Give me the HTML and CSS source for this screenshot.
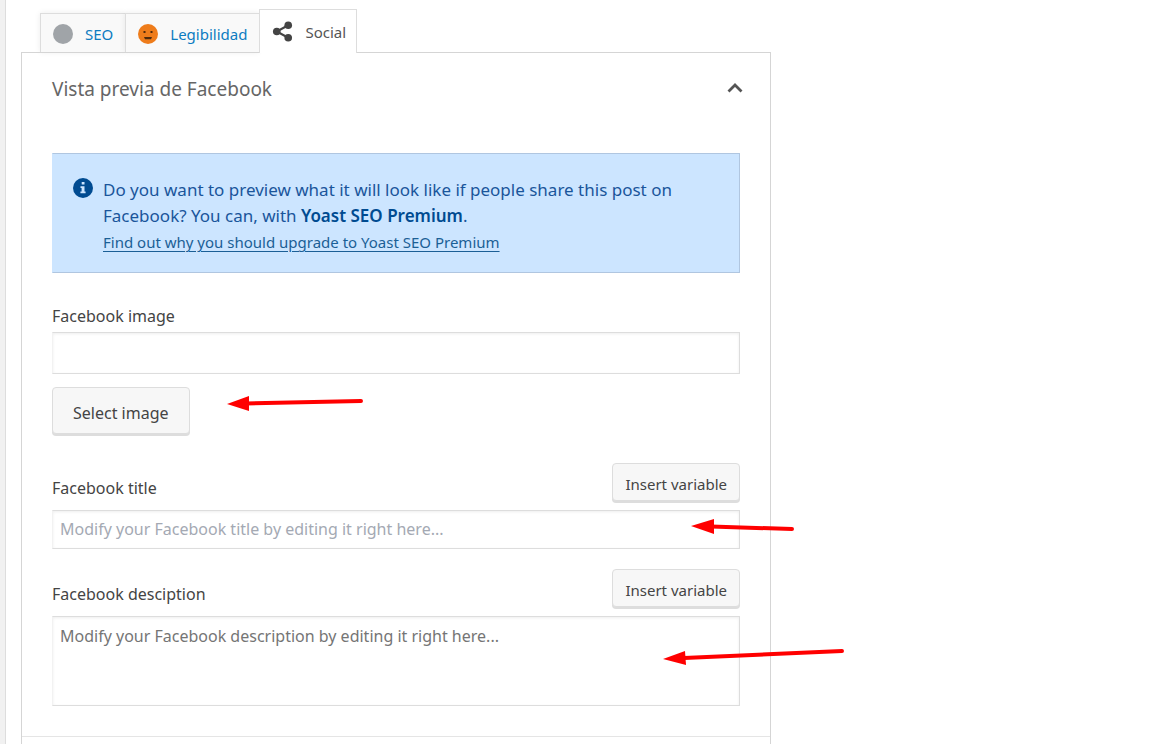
FILE: index.html
```
<!DOCTYPE html>
<html lang="es">
<head>
<meta charset="utf-8">
<meta name="viewport" content="width=device-width, initial-scale=1">
<title>Vista previa de Facebook</title>
<link rel="stylesheet" href="styles.css">
</head>
<body>

<main class="editor">
  <nav class="tabs">
    <a class="tab" href="#seo">
      <svg class="tab-icon" viewBox="0 0 20 20" aria-hidden="true"><circle cx="10" cy="10" r="10" fill="#a0a4a8"/></svg>
      SEO
    </a>
    <a class="tab" href="#legibilidad">
      <svg class="tab-icon" viewBox="0 0 20 20" aria-hidden="true">
        <circle cx="10" cy="10" r="10" fill="#ee7c1b"/>
        <path d="M5.500 7h2v2h-2zM12.500 7h2v2h-2zM6 13h8l-1 2.200H7z" fill="#4f2a0c"/>
      </svg>
      Legibilidad
    </a>
    <a class="tab active" href="#social">
      <svg class="share-icon" viewBox="0 0 22 22" aria-hidden="true">
        <path d="M17 4.500L5 11l12 6.500" fill="none" stroke="#444" stroke-width="2.200"/>
        <circle cx="17" cy="4.500" r="4" fill="#444"/>
        <circle cx="5" cy="11" r="4" fill="#444"/>
        <circle cx="17" cy="17.500" r="4" fill="#444"/>
      </svg>
      Social
    </a>
  </nav>

  <section class="panel" id="social">
    <button type="button" class="panel-header" aria-expanded="true">
      Vista previa de Facebook
      <svg class="chevron" viewBox="0 0 16 12" aria-hidden="true"><path d="M1.500 8.500L8 2l6.500 6.500" fill="none" stroke="#555" stroke-width="2.800"/></svg>
    </button>

    <div class="panel-body">
      <div class="notice">
        <svg class="info-icon" viewBox="0 0 20 20" aria-hidden="true">
          <circle cx="10" cy="10" r="10" fill="#004b91"/>
          <path d="M8.700 4h2.800v2.600H8.700zM7.500 8.200h4v5.300h1.100v1.700H7.400v-1.700h1.200V9.900H7.500z" fill="#cce5ff"/>
        </svg>
        <div class="notice-text">
          <p>Do you want to preview what it will look like if people share this post on Facebook? You can, with <b>Yoast SEO Premium</b>.</p>
          <a href="#premium">Find out why you should upgrade to Yoast SEO Premium</a>
        </div>
      </div>

      <div class="field">
        <label for="fb-image">Facebook image</label>
        <input type="text" id="fb-image">
        <button type="button" class="btn btn-large">Select image</button>
      </div>

      <div class="field">
        <div class="field-head">
          <label for="fb-title">Facebook title</label>
          <button type="button" class="btn">Insert variable</button>
        </div>
        <input type="text" id="fb-title" placeholder="Modify your Facebook title by editing it right here...">
      </div>

      <div class="field">
        <div class="field-head">
          <label for="fb-description">Facebook desciption</label>
          <button type="button" class="btn">Insert variable</button>
        </div>
        <textarea id="fb-description" placeholder="Modify your Facebook description by editing it right here..."></textarea>
      </div>
    </div>
  </section>

  <!-- Arrows pointing at the three fields -->
  <svg class="arrows" width="860" height="744" aria-hidden="true">
    <g stroke="#f00" stroke-width="4" stroke-linecap="round">
      <path d="M361 401L246 403.500"/>
      <path d="M792 529L711 526.500"/>
      <path d="M842 651L684 658"/>
    </g>
    <g fill="#f00">
      <path d="M227 404L249 396v15z"/>
      <path d="M691 526L714 519v15z"/>
      <path d="M663 659L685 651l1 14z"/>
    </g>
  </svg>
</main>

</body>
</html>
```

FILE: styles.css
```
* { box-sizing: border-box; }

body {
  margin: 0;
  padding-left: 5px;
  background-color: #f1f1f1;
  color: #444;
  font-family: "Noto Sans", "Open Sans", sans-serif;
  font-size: 16px;
  line-height: 26px;
}

button, input, textarea { font: inherit; color: inherit; }

.editor {
  display: flex;
  flex-direction: column;
  min-height: 100vh;
  padding: 9px 15px 0;
  border-left: 1px solid #ddd;
  background-color: #fff;
}

/* Tabs */
.tabs { display: flex; align-items: flex-end; padding-left: 19px; font-size: 15px; }
.tab {
  display: flex;
  align-items: center;
  gap: 12px;
  height: 39px;
  padding: 2px 12px 0;
  border: 1px solid #ddd;
  border-right: 0;
  border-bottom: 0;
  background-color: #f9f9f9;
  box-shadow: 0 0 6px rgba(0, 0, 0, 0.08);
  color: #0d7cc1;
  text-decoration: none;
}
.tab.active {
  position: relative;
  height: 44px;
  margin-bottom: -1px;
  padding: 2px 10px 2px 12px;
  border-right: 1px solid #ddd;
  background-color: #fff;
  box-shadow: none;
  color: #555;
}
.tab-icon { width: 20px; height: 20px; }
.share-icon { width: 21px; height: 21px; }

/* Panel */
.panel {
  flex: 1;
  width: 100%;
  max-width: 750px;
  border: 1px solid #d5d5d5;
  border-bottom: 0;
}
.panel-header {
  display: flex;
  justify-content: space-between;
  align-items: center;
  width: 100%;
  height: 72px;
  padding: 0 27px 0 30px;
  border: 0;
  background: none;
  color: #666;
  font-size: 19px;
  cursor: pointer;
}
.chevron { width: 16px; height: 12px; }
.panel-body { padding: 28px 30px 30px; border-bottom: 1px solid #e5e5e5; }

.notice {
  display: flex;
  align-items: flex-start;
  gap: 10px;
  margin-bottom: 30px;
  padding: 23px 20px 17px;
  border: 1px solid #b0c6e0;
  border-left-color: #cce5ff;
  background-color: #cce5ff;
  color: #1a559b;
}
.notice p { margin: 0; font-size: 17px; }
.notice a { display: block; color: #1b5f96; font-size: 15px; text-underline-offset: 3px; }
.notice b { font-weight: 600; color: #004b91; }
.info-icon { flex: none; width: 20px; height: 20px; margin-top: 1px; }

/* Fields */
.field { display: flex; flex-direction: column; margin-bottom: 20px; }
.field:last-child { margin-bottom: 0; }
.field-head { display: flex; justify-content: space-between; align-items: center; margin-bottom: 7px; }
.field-head label { padding-top: 10px; }

.field input, .field textarea {
  width: 100%;
  height: 39px;
  padding: 4px 7px 6px;
  border: 1px solid #ddd;
  border-left-color: #f2f2f2;
  background-color: #fff;
  box-shadow: inset 0 1px 3px rgba(0, 0, 0, 0.07);
}
.field textarea { display: block; height: 90px; padding-top: 6px; resize: none; }
.field #fb-image { height: 42px; margin: 3px 0 13px; }
::placeholder { color: #a4a9b3; opacity: 1; }
textarea::placeholder { color: #757575; }

.btn {
  height: 38px;
  margin-bottom: 2px;
  padding: 4px 12px 0;
  border: 1px solid #ddd;
  border-radius: 4px;
  background-color: #f7f7f7;
  box-shadow: 0 2px 0 #ddd;
  font-size: 15px;
  cursor: pointer;
}
.btn-large {
  align-self: flex-start;
  height: 47px;
  margin-bottom: 9px;
  padding: 4px 20px 0;
  font-size: 16px;
}

.arrows { position: absolute; top: 0; left: 0; pointer-events: none; }
```
